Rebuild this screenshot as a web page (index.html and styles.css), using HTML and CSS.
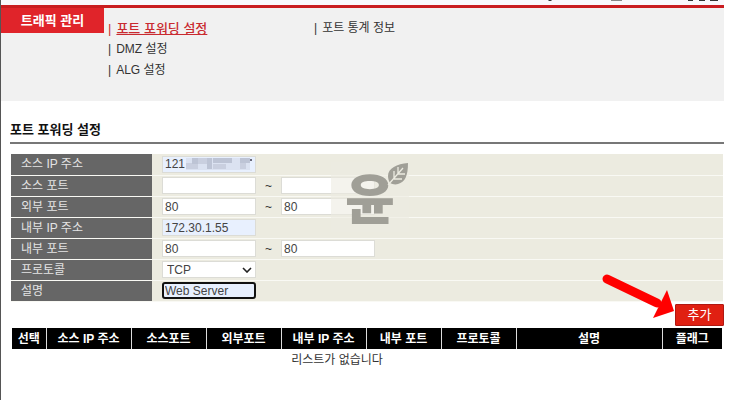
FILE: index.html
```html
<!DOCTYPE html>
<html lang="ko">
<head>
    <meta charset="UTF-8">
    <meta name="viewport" content="width=device-width, initial-scale=1.0">
    <title>포트 포워딩 설정</title>
    <link rel="stylesheet" href="styles.css">
</head>
<body>
<div class="top-strip">
    <svg width="174" height="5" viewBox="0 0 174 5">
        <path d="M4 0h4l-1 1h-2z M144 0h5v1h-5z M155 0h6v1h-6z M166 0h8v1h-8z" fill="#333"/>
        <path d="M67 0h11v1h-11z" fill="#888"/>
    </svg>
</div>

<!-- 상단 메뉴 -->
<header class="menu">
    <h1 class="menu-tab">트래픽 관리</h1>
    <nav class="menu-links">
        <ul>
            <li><a class="active" href="#forward"><span class="bar">|</span>포트 포워딩 설정</a></li>
            <li><a href="#dmz"><span class="bar">|</span>DMZ 설정</a></li>
            <li><a href="#alg"><span class="bar">|</span>ALG 설정</a></li>
        </ul>
        <ul>
            <li><a href="#stats"><span class="bar">|</span>포트 통계 정보</a></li>
        </ul>
    </nav>
</header>

<main>
    <h2>포트 포워딩 설정</h2>

    <form>
        <div class="form-area">
            <table class="form-table">
                <tr>
                    <th><label for="srcIp">소스 IP 주소</label></th>
                    <td>
                        <div class="fields">
                            <div class="masked">
                                <input class="filled" type="text" id="srcIp" value="121">
                                <svg class="mosaic" width="66" height="12" viewBox="0 0 66 12">
                                    <path d="M0 0h64v12h-64z" fill="#dbe2f1"/>
                                    <path d="M0 5h12v6h-12z M12 0h9v6h-9z M27 6h13v5h-13z M54 5h6v6h-6z" fill="#c9cfdf"/>
                                    <path d="M6 0h6v6h-6z M21 0h5v11h-5z M27 0h19v5h-19z M54 0h10v5h-10z" fill="#bdc4d5"/>
                                    <path d="M64 1h2v2h-2z" fill="#667"/>
                                </svg>
                            </div>
                        </div>
                    </td>
                </tr>
                <tr>
                    <th><label for="srcPort">소스 포트</label></th>
                    <td>
                        <div class="fields">
                            <input type="text" id="srcPort">
                            <span class="tilde">~</span>
                            <input type="text" aria-label="소스 포트 끝">
                        </div>
                    </td>
                </tr>
                <tr>
                    <th><label for="extPort">외부 포트</label></th>
                    <td>
                        <div class="fields">
                            <input type="text" id="extPort" value="80">
                            <span class="tilde">~</span>
                            <input type="text" aria-label="외부 포트 끝" value="80">
                        </div>
                    </td>
                </tr>
                <tr>
                    <th><label for="intIp">내부 IP 주소</label></th>
                    <td>
                        <div class="fields">
                            <input class="filled" type="text" id="intIp" value="172.30.1.55">
                        </div>
                    </td>
                </tr>
                <tr>
                    <th><label for="intPort">내부 포트</label></th>
                    <td>
                        <div class="fields">
                            <input type="text" id="intPort" value="80">
                            <span class="tilde">~</span>
                            <input type="text" aria-label="내부 포트 끝" value="80">
                        </div>
                    </td>
                </tr>
                <tr>
                    <th><label for="protocol">프로토콜</label></th>
                    <td>
                        <div class="fields select">
                            <select id="protocol">
                                <option>TCP</option>
                                <option>UDP</option>
                            </select>
                            <svg class="chevron" width="10" height="6" viewBox="0 0 10 6">
                                <path d="M1 1l4 4 4-4" fill="none" stroke="#222" stroke-width="1.6"/>
                            </svg>
                        </div>
                    </td>
                </tr>
                <tr>
                    <th><label for="desc">설명</label></th>
                    <td>
                        <div class="fields">
                            <input class="filled current" type="text" id="desc" value="Web Server">
                        </div>
                    </td>
                </tr>
            </table>

            <!-- 워터마크 -->
            <div class="watermark">
                <span>윤</span>
                <svg width="22" height="24" viewBox="0 0 22 24">
                    <path d="M21 1C10 2 1 6 1 14c0 3 1 5 2 7 2 1 5 2 8 1C18 20 21 14 21 1z" fill="#a09f97"/>
                    <path d="M1 23L16 6M7 16V9M11 12V5M7 17h8M11 12h7" fill="none" stroke="#ecebe1" stroke-width="1.3"/>
                </svg>
            </div>
        </div>

        <div class="actions">
            <button type="button">추가</button>
            <svg class="arrow" width="76" height="50" viewBox="0 0 76 50">
                <path d="M8 9L58 33" stroke="#f00" stroke-width="9" stroke-linecap="round"/>
                <path d="M68 20L75 41 54 48z" fill="#f00"/>
            </svg>
        </div>
    </form>

    <table class="list">
        <colgroup>
            <col class="col-check">
            <col class="col-ip">
            <col class="col-port">
            <col class="col-port">
            <col class="col-ip">
            <col class="col-port">
            <col class="col-port">
            <col>
            <col class="col-flag">
        </colgroup>
        <thead>
            <tr>
                <th>선택</th>
                <th>소스 IP 주소</th>
                <th>소스포트</th>
                <th>외부포트</th>
                <th>내부 IP 주소</th>
                <th>내부 포트</th>
                <th>프로토콜</th>
                <th>설명</th>
                <th>플래그</th>
            </tr>
        </thead>
        <tbody>
            <tr>
                <td colspan="8">리스트가 없습니다</td>
                <td></td>
            </tr>
        </tbody>
    </table>
</main>
</body>
</html>
```
FILE: styles.css
```css
* {
    box-sizing: border-box;
}

body {
    margin: 0;
    padding-right: 6px;
    min-height: 100vh;
    border-left: 1px solid #555;
    background: #fff;
    color: #333;
    font-family: "Liberation Sans", "Noto Sans CJK KR", sans-serif;
    font-size: 12px;
    line-height: 16px;
}

.top-strip {
    display: flex;
    justify-content: flex-end;
    height: 5px;
    padding-right: 6px;
    background: #f9f8fc;
}

/* 상단 메뉴 */
.menu {
    display: flex;
    align-items: flex-start;
    min-height: 96px;
    border-top: 3px solid #c91c20;
    background: #f1f1f1;
}

.menu-tab {
    width: 103px;
    margin: 0;
    padding: 5px 0 4px;
    background: #e0242a;
    color: #fff;
    font-size: 13px;
    line-height: 16px;
    text-align: center;
}

.menu-links {
    display: flex;
    padding: 10px 0 0 4px;
}

.menu-links ul {
    width: 206px;
    margin: 0;
    padding: 0;
    list-style: none;
}

.menu-links li {
    height: 21px;
    line-height: 21px;
}

.menu-links a {
    color: #333;
    text-decoration: none;
}

.menu-links a.active {
    color: #c92a30;
    font-size: 13px;
    font-weight: 500;
    text-decoration: underline;
}

.bar {
    padding-right: 5px;
}

main {
    padding: 21px 0 0 9px;
}

h2 {
    margin: 0 0 10px;
    padding-bottom: 4px;
    border-bottom: 2px solid #777;
    color: #111;
    font-size: 13px;
    line-height: 16px;
}

/* 입력 폼 */
.form-area {
    position: relative;
    padding: 0 1px;
}

.form-table {
    width: 100%;
    border-collapse: collapse;
}

.form-table th,
.form-table td {
    height: 21px;
    padding: 0 0 0 10px;
    border-bottom: 1px solid #f9f9f4;
}

.form-table th {
    width: 141px;
    background: #666;
    color: #e4e4e4;
    font-weight: normal;
    text-align: left;
}

.form-table td {
    background: #ecebe0;
}

.fields {
    display: flex;
    align-items: center;
}

.fields input,
.fields select {
    display: block;
    width: 94px;
    height: 17px;
    margin: 0;
    padding: 0 2px;
    border: 1px solid #dcdcd6;
    background: #fff;
    color: #444;
    font-family: inherit;
    font-size: 12px;
}

.fields .filled {
    background: #e8f0fe;
}

.fields .current {
    padding: 0 1px;
    border: 2px solid #111;
    border-radius: 3px;
    outline: none;
}

.tilde {
    width: 25px;
    text-align: center;
}

.masked,
.select {
    position: relative;
}

.mosaic {
    position: absolute;
    top: 2px;
    left: 24px;
}

.fields select {
    padding: 0 4px;
    appearance: none;
}

.chevron {
    position: absolute;
    top: 6px;
    left: 80px;
}

.watermark {
    position: absolute;
    top: 8px;
    left: 321px;
    width: 78px;
    height: 70px;
    background: rgba(236, 235, 225, 0.6);
    color: #a09f97;
}

.watermark span {
    position: absolute;
    top: 5px;
    left: 14px;
    font-size: 54px;
    font-weight: 900;
    line-height: 68px;
}

.watermark svg {
    position: absolute;
    top: 0;
    right: 0;
}

.actions {
    position: relative;
    display: flex;
    justify-content: flex-end;
    padding-top: 2px;
}

button {
    width: 49px;
    height: 22px;
    padding: 0;
    border: 1px solid #b01812;
    border-radius: 1px;
    background: #e02012;
    color: #fff;
    font-family: inherit;
    font-size: 13px;
    line-height: 16px;
}

.arrow {
    position: absolute;
    top: -32px;
    right: 49px;
}

/* 목록 */
.list {
    width: calc(100% - 4px);
    margin: 2px 2px 0;
    border-collapse: collapse;
    table-layout: fixed;
}

.col-check {
    width: 34px;
}

.col-ip {
    width: 85px;
}

.col-port {
    width: 75px;
}

.col-flag {
    width: 60px;
}

.list th {
    height: 21px;
    padding: 1px 0 0;
    background: #000;
    color: #fff;
}

.list th + th {
    border-left: 1px solid #ddd;
}

.list td {
    height: 22px;
    padding: 1px 0 0;
    text-align: center;
}
```
